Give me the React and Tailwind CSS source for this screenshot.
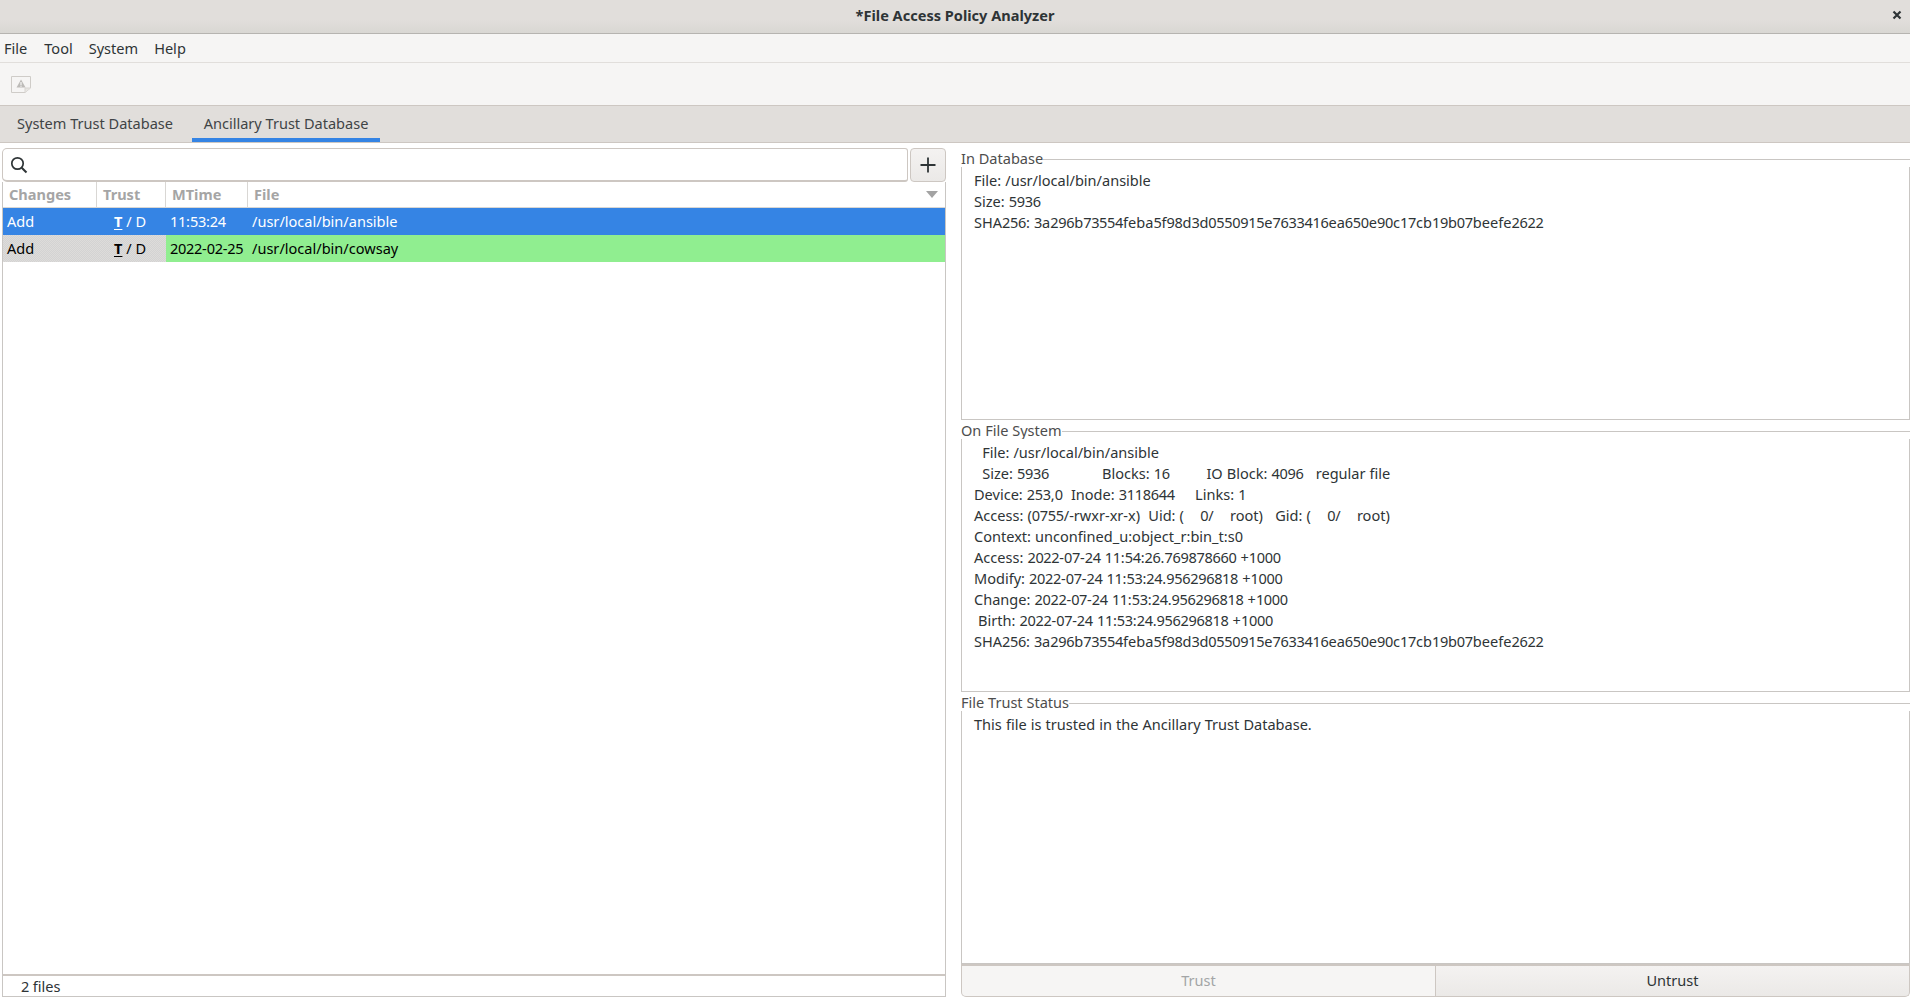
const FONT = "font-['Noto_Sans',sans-serif]";

// Digits in the reference sit on a whole-pixel advance of 8px, narrower than the font's natural one.
function T({ children }) {
  return children.split(/(\d+)/).map((part, i) =>
    /^\d+$/.test(part) ? (
      <span key={i} className="tracking-[-0.33px]">{part}</span>
    ) : (
      part
    )
  );
}

function Frame({ title, lines, className }) {
  return (
    <div className={`flex flex-col ${className}`}>
      <div className="flex items-center h-[15px] shrink-0">
        <span className="text-[14.55px] leading-[15px] text-[#4d4d4d] pb-[2px]">{title}</span>
        <div className="flex-1 h-px bg-[#c9c6c3]" />
      </div>
      <div className="flex-1 bg-white border-x border-b border-[#c9c6c3] pl-3 pt-[3px]">
        {lines.map((l, i) => (
          <div key={i} className="h-[21px] leading-[21px] text-[14.55px] text-[#2e3436] whitespace-pre [word-spacing:0.3px]"><T>{l}</T></div>
        ))}
      </div>
    </div>
  );
}

function Row({ bg, changesBg, text, mtime, file }) {
  return (
    <div className={`flex h-[27px] items-center text-[14.55px] ${text} ${bg}`}>
      <div className={`flex items-center h-full w-[163px] ${changesBg}`}>
        <span className="pl-[4px] w-[111px]">Add</span>
        <span className="whitespace-pre"><span className="font-bold underline underline-offset-2">T</span> / D</span>
      </div>
      <div className="pl-[4px] w-[82px] whitespace-pre"><T>{mtime}</T></div>
      <div className="pl-[4px] flex-1">{file}</div>
    </div>
  );
}

export default function App() {
  return (
    <div className={`h-[1001px] w-[1910px] flex flex-col bg-white overflow-hidden ${FONT}`}>
      <div className="h-[34px] shrink-0 flex items-center justify-center relative bg-[linear-gradient(#e1dedb,#e1dedb_60%,#d9d7d3)] border-b border-[#b6b4b0]">
        <span className="text-[14.55px] font-bold text-[#2e3436] pb-[1px]">*File Access Policy Analyzer</span>
        <svg className="absolute right-[7px] top-[9px]" width="12" height="12" viewBox="0 0 12 12">
          <path d="M2.5 2.5 L9.5 9.5 M9.5 2.5 L2.5 9.5" stroke="#2e3436" strokeWidth="2.2" />
        </svg>
      </div>

      <div className="h-[29px] shrink-0 flex items-center bg-[#f6f5f4] border-b border-[#e1dedb] text-[14.55px] text-[#2e3436] pt-[1px]">
        <span className="ml-1">File</span>
        <span className="ml-[17px]">Tool</span>
        <span className="ml-4">System</span>
        <span className="ml-4">Help</span>
      </div>

      <div className="h-[43px] shrink-0 flex items-center bg-[#f6f5f4] border-b border-[#cdc7c2] pl-[10px]">
        <svg width="22" height="19" viewBox="0 0 22 19">
          <path d="M1.5 1.5 H20.5 V13 L15 17.5 H1.5 Z" fill="#f6f5f4" stroke="#cfccc8" />
          <path d="M15 17.5 V13 H20.5" fill="#e8e6e3" stroke="#d8d5d2" />
          <path d="M11 4.5 L15.5 12.5 H6.5 Z" fill="#bdbbb8" />
          <rect x="10.4" y="7" width="1.2" height="3" fill="#f6f5f4" />
          <rect x="10.4" y="10.6" width="1.2" height="1.2" fill="#f6f5f4" />
        </svg>
      </div>

      <div className="h-[37px] shrink-0 flex bg-[#e1dedb] border-b border-[#cdc7c2] text-[14.55px] text-[#3f4446]">
        <div className="w-[192px] flex items-center pl-[17px]">System Trust Database</div>
        <div className="w-[188px] flex items-center justify-center border-b-4 border-[#3584e4] pt-1">Ancillary Trust Database</div>
      </div>

      <div className="flex-1 flex min-h-0 pb-1">
        <div className="w-[944px] ml-[2px] shrink-0 flex flex-col pt-[5px]">
          <div className="flex h-[34px] shrink-0 gap-[2px]">
            <div className="flex-1 flex items-center pl-[7px] bg-white rounded-l-[5px] rounded-r-[3px] border border-[#cdc7c2] border-b-2">
              <svg width="18" height="18" viewBox="0 0 18 18" fill="none" stroke="#2e3436" strokeWidth="1.7">
                <circle cx="7.5" cy="7.5" r="5.7" />
                <path d="M11.7 11.7 L16.5 16.5" strokeWidth="2" />
              </svg>
            </div>
            <div className="w-[36px] flex items-center justify-center rounded-[4px] border border-[#cdc7c2] bg-[linear-gradient(#f4f2f1,#ebe9e7)]">
              <svg width="18" height="18" viewBox="0 0 18 18"><path d="M9 1.5 V16.5 M1.5 9 H16.5" stroke="#2e3436" strokeWidth="1.8" /></svg>
            </div>
          </div>
          <div className="flex-1 flex flex-col min-h-0 border-x border-b border-[#c9c6c3]">
            <div className="h-[26px] shrink-0 flex items-center text-[14.55px] font-bold text-[#a5a5a5] border-b border-[#d9d7d4]">
              <div className="w-[94px] h-[25px] pl-[6px] leading-[25px] border-r border-[#d9d7d4]">Changes</div>
              <div className="w-[69px] h-[25px] pl-[6px] leading-[25px] border-r border-[#d9d7d4]">Trust</div>
              <div className="w-[82px] h-[25px] pl-[6px] leading-[25px] border-r border-[#d9d7d4]">MTime</div>
              <div className="flex-1 pl-[6px] flex items-center justify-between pr-[7px]">
                <span>File</span>
                <svg width="12" height="7" viewBox="0 0 12 7"><path d="M0 0 H12 L6 7 Z" fill="#a3a3a3" /></svg>
              </div>
            </div>
            <Row bg="bg-[#3584e4]" changesBg="" text="text-white" mtime="11:53:24" file="/usr/local/bin/ansible" />
            <Row bg="bg-[#90ee90]" changesBg="bg-[repeating-conic-gradient(#d3d3d3_0_25%,#dedcda_0_50%)] bg-[length:2px_2px]" text="text-black" mtime="2022-02-25" file="/usr/local/bin/cowsay" />
            <div className="flex-1" />
            <div className="h-[22px] shrink-0 border-t-2 border-[#cdc7c2] pl-[18px] text-[14.55px] leading-[21px] text-[#2e3436]"><T>2 files</T></div>
          </div>
        </div>

        <div className="flex-1 ml-[15px] flex flex-col pt-[9px] min-w-0">
          <Frame
            title="In Database"
            className="h-[268px] shrink-0 mb-[4px]"
            lines={[
              "File: /usr/local/bin/ansible",
              "Size: 5936",
              "SHA256: 3a296b73554feba5f98d3d0550915e7633416ea650e90c17cb19b07beefe2622",
            ]}
          />
          <Frame
            title="On File System"
            className="h-[268px] shrink-0 mb-[4px]"
            lines={[
              "  File: /usr/local/bin/ansible",
              "  Size: 5936             Blocks: 16         IO Block: 4096   regular file",
              "Device: 253,0  Inode: 3118644     Links: 1",
              "Access: (0755/-rwxr-xr-x)  Uid: (    0/    root)   Gid: (    0/    root)",
              "Context: unconfined_u:object_r:bin_t:s0",
              "Access: 2022-07-24 11:54:26.769878660 +1000",
              "Modify: 2022-07-24 11:53:24.956296818 +1000",
              "Change: 2022-07-24 11:53:24.956296818 +1000",
              " Birth: 2022-07-24 11:53:24.956296818 +1000",
              "SHA256: 3a296b73554feba5f98d3d0550915e7633416ea650e90c17cb19b07beefe2622",
            ]}
          />
          <Frame
            title="File Trust Status"
            className="flex-1 min-h-0"
            lines={["This file is trusted in the Ancillary Trust Database."]}
          />
          <div className="flex h-[33px] shrink-0 text-[14.55px] border-t-2 border-[#cdc7c2]">
            <div className="flex-1 flex items-center justify-center rounded-bl-[5px] border border-t-0 border-[#cdc7c2] bg-[#f6f5f4] text-[#a3a5a6]">Trust</div>
            <div className="flex-1 flex items-center justify-center rounded-br-[5px] border border-t-0 border-l-0 border-[#cdc7c2] bg-[linear-gradient(#f4f2f1,#ebe9e7)] text-[#2e3436]">Untrust</div>
          </div>
        </div>
      </div>
    </div>
  );
}
